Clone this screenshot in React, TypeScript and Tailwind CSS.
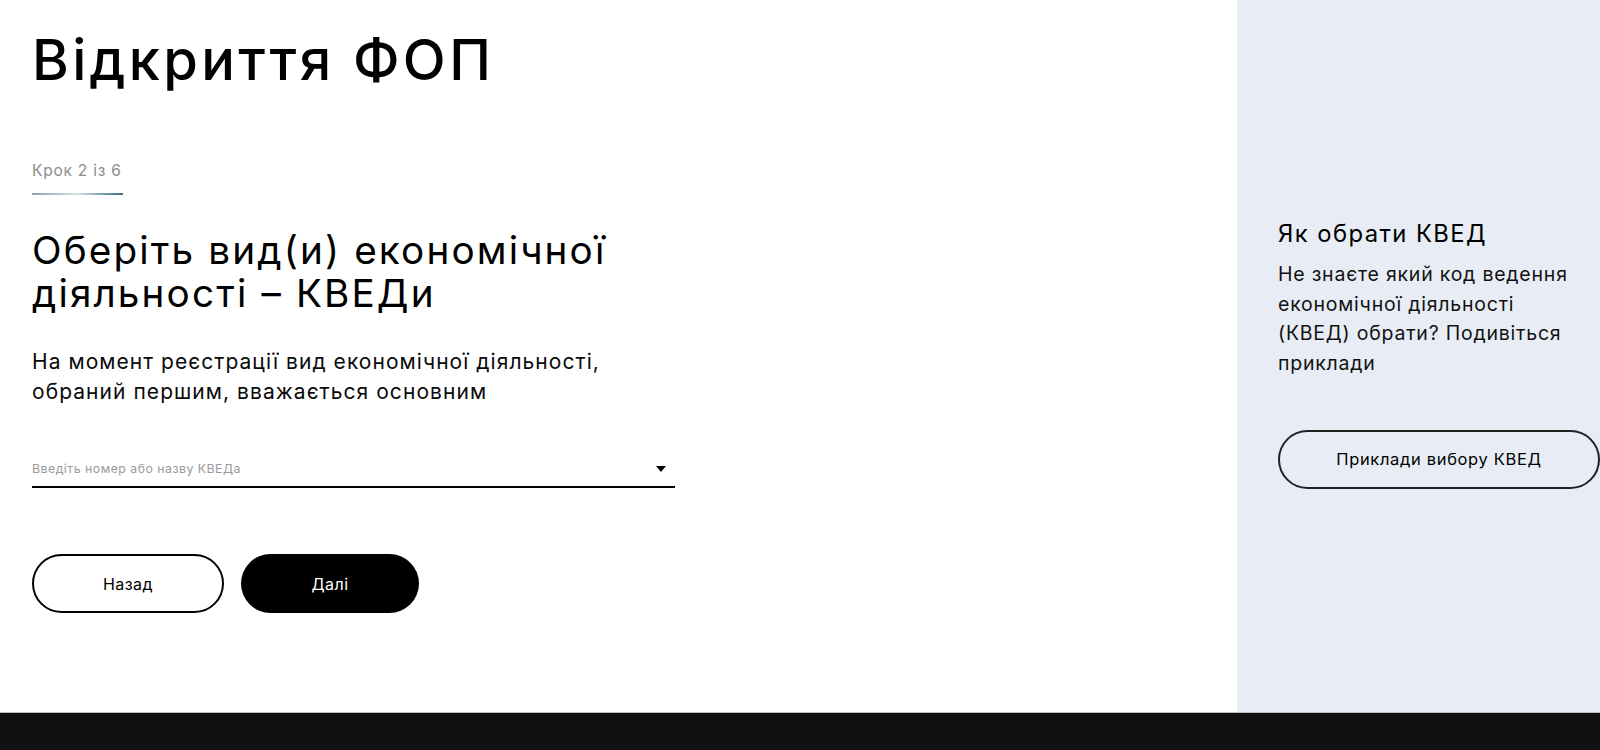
const font = { fontFamily: 'Inter, "Liberation Sans", Arial, sans-serif' };

function StepIndicator() {
  return (
    <div className="mt-[69px]">
      <div className="text-[15.5px] leading-[20px] tracking-[0.05em] text-[#8c8c8c]">Крок 2 із 6</div>
      <div className="mt-[12px] h-[2px] w-[91px] bg-gradient-to-r from-[#8aa0b0] via-[#cfe6e6] to-[#3f6a8c]" />
    </div>
  );
}

function KvedSelect() {
  return (
    <div className="mt-[55px] w-[643px] border-b-2 border-black pb-[10px] flex items-end justify-between">
      <span className="text-[12.3px] leading-[14px] tracking-[0.04em] text-[#9a9a9a]">
        Введіть номер або назву КВЕДа
      </span>
      <svg width="10" height="6" viewBox="0 0 10 6" className="mr-[9px] mb-[4px]">
        <path d="M0 0h10L5 6z" fill="#000" />
      </svg>
    </div>
  );
}

export default function App() {
  return (
    <div className="h-[750px] flex flex-col bg-white text-black" style={font}>
      <div className="flex-1 flex min-h-0">
        <main className="flex-1 pl-[32px] pt-[28px]">
          <h1 className="text-[56px] leading-[64px] tracking-[0.06em] font-medium">Відкриття ФОП</h1>
          <StepIndicator />
          <h2 className="mt-[34px] text-[38.7px] leading-[43px] tracking-[0.055em] font-normal">
            Оберіть вид(и) економічної
            <br />
            діяльності – КВЕДи
          </h2>
          <p className="mt-[32px] text-[21px] leading-[30px] tracking-[0.05em] text-[#0a0a0a]">
            На момент реєстрації вид економічної діяльності,
            <br />
            обраний першим, вважається основним
          </p>
          <KvedSelect />
          <div className="mt-[66px] flex gap-[17px]">
            <button className="h-[59px] w-[192px] rounded-full border-2 border-black bg-white text-[16px] tracking-[0.03em]">
              Назад
            </button>
            <button className="h-[59px] w-[178px] rounded-full bg-black text-white text-[16px] tracking-[0.03em]">
              Далі
            </button>
          </div>
        </main>
        <aside className="w-[363px] bg-[#e8edf5] pl-[41px] pt-[220px]">
          <h3 className="text-[23.8px] leading-[28px] tracking-[0.06em] font-normal">Як обрати КВЕД</h3>
          <p className="mt-[12px] w-[311px] text-[19.5px] leading-[29.5px] tracking-[0.04em] text-[#111]">
            Не знаєте який код ведення економічної діяльності (КВЕД) обрати? Подивіться приклади
          </p>
          <button className="mt-[52px] h-[59px] w-[322px] rounded-full border-2 border-[#222] text-[16.5px] tracking-[0.04em]">
            Приклади вибору КВЕД
          </button>
        </aside>
      </div>
      <footer className="h-[38px] shrink-0 bg-[#111111] border-t border-[#bdbdbd]" />
    </div>
  );
}
